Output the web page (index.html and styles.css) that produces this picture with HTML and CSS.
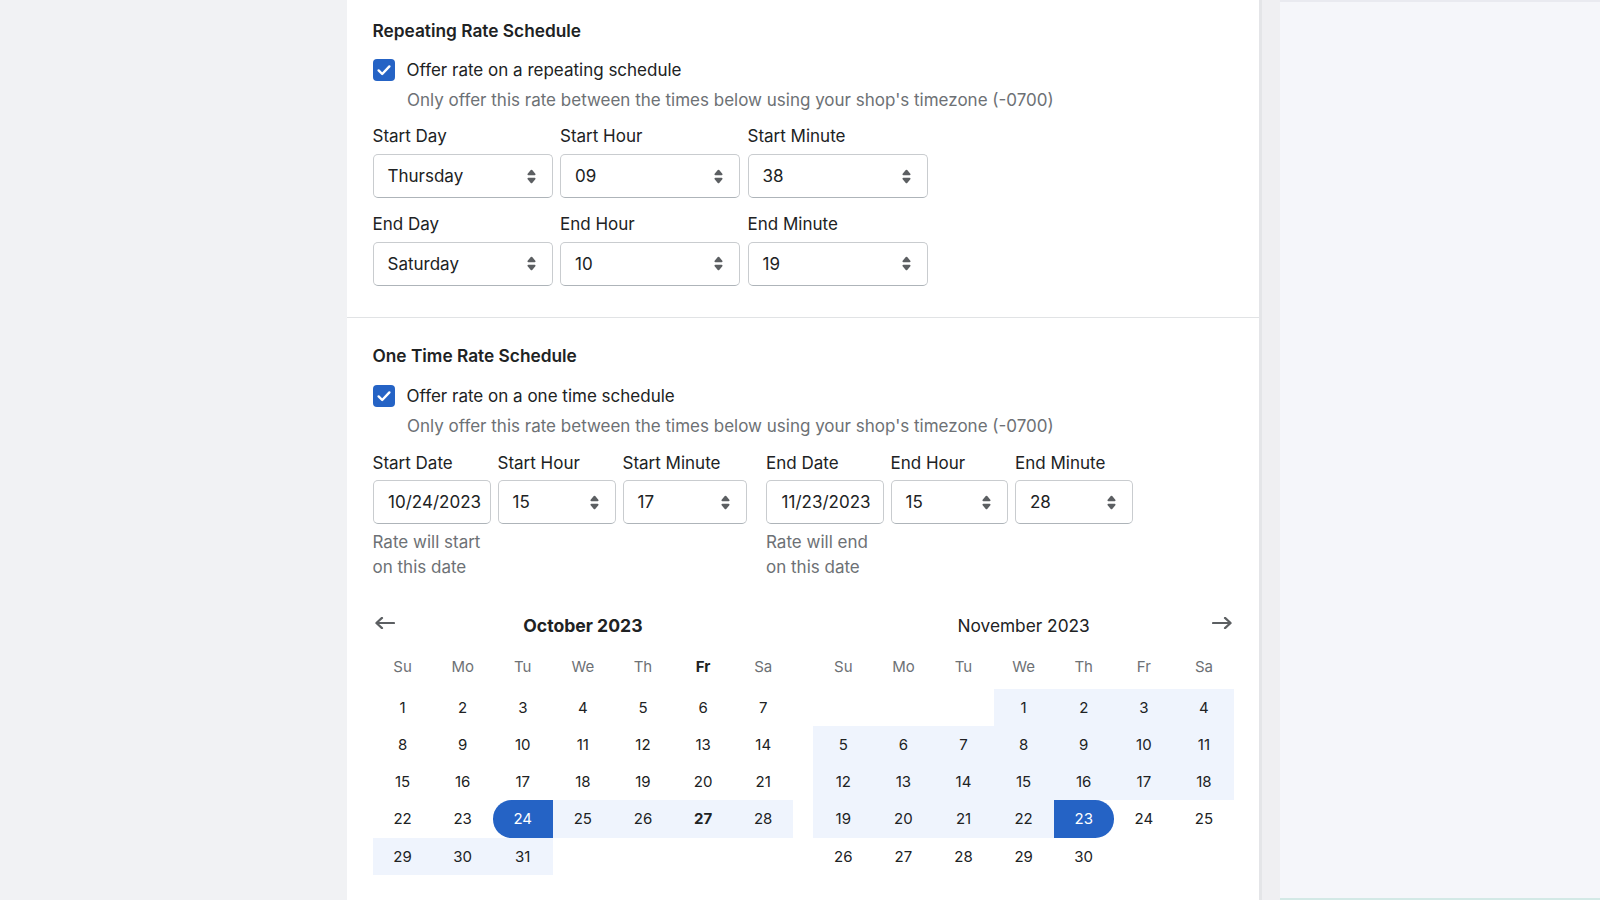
FILE: index.html
```html
<!DOCTYPE html>
<html lang="en">
<head>
<meta charset="utf-8">
<title>Rate Schedule</title>
<link rel="stylesheet" href="styles.css">
</head>
<body>
<div class="page">
  <div class="side-left"></div>
  <main class="card">
    <section class="section section-first">
      <h2 class="heading">Repeating Rate Schedule</h2>
      <label class="check-row">
        <span class="checkbox"><svg viewBox="0 0 22 22" width="22" height="22"><path d="M5.6 11.4l3.6 3.6 7.2-7.6" fill="none" stroke="#fff" stroke-width="2.4" stroke-linecap="round" stroke-linejoin="round"/></svg></span>
        <span class="check-label">Offer rate on a repeating schedule</span>
      </label>
      <p class="help">Only offer this rate between the times below using your shop's timezone (-0700)</p>
      <div class="select-row">
        <div class="field w180"><div class="label">Start Day</div><div class="control select"><span class="value">Thursday</span><svg class="sel-icon" viewBox="0 0 20 20"><path d="M7.676 9h4.648c.563 0 .879-.603.53-1.014l-2.323-2.746a.708.708 0 0 0-1.062 0l-2.324 2.746c-.347.411-.032 1.014.531 1.014Zm4.648 2h-4.648c-.563 0-.878.603-.53 1.014l2.323 2.746c.27.32.792.32 1.062 0l2.323-2.746c.349-.411.033-1.014-.53-1.014Z"/></svg></div></div>
        <div class="field w180"><div class="label">Start Hour</div><div class="control select"><span class="value">09</span><svg class="sel-icon" viewBox="0 0 20 20"><path d="M7.676 9h4.648c.563 0 .879-.603.53-1.014l-2.323-2.746a.708.708 0 0 0-1.062 0l-2.324 2.746c-.347.411-.032 1.014.531 1.014Zm4.648 2h-4.648c-.563 0-.878.603-.53 1.014l2.323 2.746c.27.32.792.32 1.062 0l2.323-2.746c.349-.411.033-1.014-.53-1.014Z"/></svg></div></div>
        <div class="field w180"><div class="label">Start Minute</div><div class="control select"><span class="value">38</span><svg class="sel-icon" viewBox="0 0 20 20"><path d="M7.676 9h4.648c.563 0 .879-.603.53-1.014l-2.323-2.746a.708.708 0 0 0-1.062 0l-2.324 2.746c-.347.411-.032 1.014.531 1.014Zm4.648 2h-4.648c-.563 0-.878.603-.53 1.014l2.323 2.746c.27.32.792.32 1.062 0l2.323-2.746c.349-.411.033-1.014-.53-1.014Z"/></svg></div></div>
      </div>
      <div class="select-row row-second">
        <div class="field w180"><div class="label">End Day</div><div class="control select"><span class="value">Saturday</span><svg class="sel-icon" viewBox="0 0 20 20"><path d="M7.676 9h4.648c.563 0 .879-.603.53-1.014l-2.323-2.746a.708.708 0 0 0-1.062 0l-2.324 2.746c-.347.411-.032 1.014.531 1.014Zm4.648 2h-4.648c-.563 0-.878.603-.53 1.014l2.323 2.746c.27.32.792.32 1.062 0l2.323-2.746c.349-.411.033-1.014-.53-1.014Z"/></svg></div></div>
        <div class="field w180"><div class="label">End Hour</div><div class="control select"><span class="value">10</span><svg class="sel-icon" viewBox="0 0 20 20"><path d="M7.676 9h4.648c.563 0 .879-.603.53-1.014l-2.323-2.746a.708.708 0 0 0-1.062 0l-2.324 2.746c-.347.411-.032 1.014.531 1.014Zm4.648 2h-4.648c-.563 0-.878.603-.53 1.014l2.323 2.746c.27.32.792.32 1.062 0l2.323-2.746c.349-.411.033-1.014-.53-1.014Z"/></svg></div></div>
        <div class="field w180"><div class="label">End Minute</div><div class="control select"><span class="value">19</span><svg class="sel-icon" viewBox="0 0 20 20"><path d="M7.676 9h4.648c.563 0 .879-.603.53-1.014l-2.323-2.746a.708.708 0 0 0-1.062 0l-2.324 2.746c-.347.411-.032 1.014.531 1.014Zm4.648 2h-4.648c-.563 0-.878.603-.53 1.014l2.323 2.746c.27.32.792.32 1.062 0l2.323-2.746c.349-.411.033-1.014-.53-1.014Z"/></svg></div></div>
      </div>
    </section>

    <section class="section section-second">
      <h2 class="heading">One Time Rate Schedule</h2>
      <label class="check-row">
        <span class="checkbox"><svg viewBox="0 0 22 22" width="22" height="22"><path d="M5.6 11.4l3.6 3.6 7.2-7.6" fill="none" stroke="#fff" stroke-width="2.4" stroke-linecap="round" stroke-linejoin="round"/></svg></span>
        <span class="check-label">Offer rate on a one time schedule</span>
      </label>
      <p class="help">Only offer this rate between the times below using your shop's timezone (-0700)</p>

      <div class="date-row">
        <div class="date-group">
          <div class="field w118"><div class="label">Start Date</div><div class="control date"><span class="date-text">10/24/2023</span></div><div class="hint">Rate will start on this date</div></div>
          <div class="field w118"><div class="label">Start Hour</div><div class="control select"><span class="value">15</span><svg class="sel-icon" viewBox="0 0 20 20"><path d="M7.676 9h4.648c.563 0 .879-.603.53-1.014l-2.323-2.746a.708.708 0 0 0-1.062 0l-2.324 2.746c-.347.411-.032 1.014.531 1.014Zm4.648 2h-4.648c-.563 0-.878.603-.53 1.014l2.323 2.746c.27.32.792.32 1.062 0l2.323-2.746c.349-.411.033-1.014-.53-1.014Z"/></svg></div></div>
          <div class="field w124"><div class="label">Start Minute</div><div class="control select"><span class="value">17</span><svg class="sel-icon" viewBox="0 0 20 20"><path d="M7.676 9h4.648c.563 0 .879-.603.53-1.014l-2.323-2.746a.708.708 0 0 0-1.062 0l-2.324 2.746c-.347.411-.032 1.014.531 1.014Zm4.648 2h-4.648c-.563 0-.878.603-.53 1.014l2.323 2.746c.27.32.792.32 1.062 0l2.323-2.746c.349-.411.033-1.014-.53-1.014Z"/></svg></div></div>
        </div>
        <div class="date-group">
          <div class="field w117"><div class="label">End Date</div><div class="control date"><span class="date-text">11/23/2023</span></div><div class="hint">Rate will end on this date</div></div>
          <div class="field w117"><div class="label">End Hour</div><div class="control select"><span class="value">15</span><svg class="sel-icon" viewBox="0 0 20 20"><path d="M7.676 9h4.648c.563 0 .879-.603.53-1.014l-2.323-2.746a.708.708 0 0 0-1.062 0l-2.324 2.746c-.347.411-.032 1.014.531 1.014Zm4.648 2h-4.648c-.563 0-.878.603-.53 1.014l2.323 2.746c.27.32.792.32 1.062 0l2.323-2.746c.349-.411.033-1.014-.53-1.014Z"/></svg></div></div>
          <div class="field w118"><div class="label">End Minute</div><div class="control select"><span class="value">28</span><svg class="sel-icon" viewBox="0 0 20 20"><path d="M7.676 9h4.648c.563 0 .879-.603.53-1.014l-2.323-2.746a.708.708 0 0 0-1.062 0l-2.324 2.746c-.347.411-.032 1.014.531 1.014Zm4.648 2h-4.648c-.563 0-.878.603-.53 1.014l2.323 2.746c.27.32.792.32 1.062 0l2.323-2.746c.349-.411.033-1.014-.53-1.014Z"/></svg></div></div>
        </div>
      </div>

      <div class="calendars">
        <div class="cal">
          <div class="cal-head">
            <span class="nav nav-prev"><svg viewBox="0 0 20 12" width="20" height="12"><path d="M19 6H1.6M7 0.9L1.4 6 7 11.1" fill="none" stroke="#5c5f62" stroke-width="2.2" stroke-linecap="round" stroke-linejoin="round"/></svg></span>
            <div class="cal-title cal-title-bold">October 2023</div>
            <span class="nav"></span>
          </div>
          <div class="weekdays">
            <span>Su</span><span>Mo</span><span>Tu</span><span>We</span><span>Th</span><span class="today">Fr</span><span>Sa</span>
          </div>
          <div class="days">
            <span>1</span><span>2</span><span>3</span><span>4</span><span>5</span><span>6</span><span>7</span>
            <span>8</span><span>9</span><span>10</span><span>11</span><span>12</span><span>13</span><span>14</span>
            <span>15</span><span>16</span><span>17</span><span>18</span><span>19</span><span>20</span><span>21</span>
            <span>22</span><span>23</span><span class="sel sel-start">24</span><span class="range">25</span><span class="range">26</span><span class="range today">27</span><span class="range">28</span>
            <span class="range">29</span><span class="range">30</span><span class="range">31</span>
          </div>
        </div>
        <div class="cal">
          <div class="cal-head">
            <span class="nav"></span>
            <div class="cal-title">November 2023</div>
            <span class="nav nav-next"><svg viewBox="0 0 20 12" width="20" height="12"><path d="M1 6h17.4M13 0.9L18.6 6 13 11.1" fill="none" stroke="#5c5f62" stroke-width="2.2" stroke-linecap="round" stroke-linejoin="round"/></svg></span>
          </div>
          <div class="weekdays">
            <span>Su</span><span>Mo</span><span>Tu</span><span>We</span><span>Th</span><span>Fr</span><span>Sa</span>
          </div>
          <div class="days">
            <span class="blank"></span><span class="blank"></span><span class="blank"></span><span class="range">1</span><span class="range">2</span><span class="range">3</span><span class="range">4</span>
            <span class="range">5</span><span class="range">6</span><span class="range">7</span><span class="range">8</span><span class="range">9</span><span class="range">10</span><span class="range">11</span>
            <span class="range">12</span><span class="range">13</span><span class="range">14</span><span class="range">15</span><span class="range">16</span><span class="range">17</span><span class="range">18</span>
            <span class="range">19</span><span class="range">20</span><span class="range">21</span><span class="range">22</span><span class="sel sel-end">23</span><span>24</span><span>25</span>
            <span>26</span><span>27</span><span>28</span><span>29</span><span>30</span>
          </div>
        </div>
      </div>
    </section>
  </main>
  <div class="gap-strip"></div>
  <div class="side-right"></div>
</div>
</body>
</html>
```
FILE: styles.css
```css
* { box-sizing: border-box; }
html, body { margin: 0; padding: 0; }
body {
  font-family: Inter, "Noto Sans", "Liberation Sans", sans-serif;
  color: #202223;
  font-size: 17px;
  background: #f1f2f4;
}
.page {
  display: flex;
  width: 1600px;
  height: 900px;
  overflow: hidden;
}
.side-left {
  width: 347px;
  flex: none;
  background: #f1f2f4;
}
.card {
  width: 912px;
  flex: none;
  background: #fff;
}
.gap-strip {
  width: 21px;
  flex: none;
  background: #efeff2;
  border-left: 3px solid #e4e5e8;
}
.side-right {
  flex: 1;
  background: #f5f6fa;
  border-top: 2px solid #e9eaf0;
  border-bottom: 2px solid #d3e9e6;
}
.section {
  padding: 0 25px 0 25.5px;
}
.section-first {
  padding-top: 18.5px;
  padding-bottom: 31.5px;
  border-bottom: 1px solid #e1e3e5;
}
.section-second {
  padding-top: 26px;
}
.heading {
  margin: 0;
  font-size: 17.3px;
  line-height: 24px;
  font-weight: 600;
}
.check-row {
  display: flex;
  align-items: center;
  gap: 12px;
  height: 22px;
  margin-top: 16.8px;
}
.checkbox {
  width: 22px;
  height: 22px;
  flex: none;
  border-radius: 4px;
  background: #2563c5;
  display: flex;
}
.check-label {
  line-height: 22px;
}
.help {
  margin: 7.2px 0 0 34.5px;
  line-height: 24px;
  color: #6d7175;
}
.select-row {
  display: flex;
  gap: 7.5px;
  margin-top: 12px;
}
.row-second { margin-top: 13.5px; }
.field { flex: none; }
.w180 { width: 180px; }
.w118 { width: 118px; }
.w117 { width: 117.5px; }
.w124 { width: 124px; }
.label {
  line-height: 24px;
  margin-bottom: 5.8px;
  white-space: nowrap;
}
.control {
  height: 44px;
  border: 1px solid #c9cccf;
  border-bottom-color: #aeb4b9;
  border-radius: 5px;
  background: #fff;
  display: flex;
  align-items: center;
}
.select {
  justify-content: space-between;
  padding: 0 7px 0 14px;
}
.sel-icon {
  width: 27px;
  height: 27px;
  fill: #5c5f62;
  flex: none;
}
.date {
  padding: 0 1px 0 14.6px;
}
.date-text {
  display: block;
  white-space: nowrap;
}
.date-row {
  display: flex;
  gap: 19.5px;
  margin-top: 12.5px;
  align-items: flex-start;
}
.date-group {
  display: flex;
  gap: 7px;
}
.hint {
  margin-top: 5.9px;
  line-height: 24.5px;
  color: #6d7175;
}
.calendars {
  display: flex;
  gap: 20px;
  margin-top: 34.8px;
}
.cal { flex: 1; }
.cal-head {
  display: grid;
  grid-template-columns: 24px 1fr 24px;
  height: 24px;
}
.nav { display: flex; }
.nav svg { margin-top: 3px; }
.nav-prev svg { margin-left: 2.5px; }
.nav-next { justify-content: flex-end; }
.nav-next svg { margin-right: 2.3px; }
.cal-title {
  text-align: center;
  line-height: 24px;
  font-size: 17.3px;
}
.cal-title-bold { font-weight: 700; font-size: 17.6px; }
.weekdays, .days {
  display: grid;
  grid-template-columns: repeat(7, 1fr);
}
.weekdays {
  margin-top: 9.5px;
  color: #6d7175;
  font-size: 15px;
}
.weekdays span {
  text-align: center;
  line-height: 37.3px;
}
.weekdays .today { color: #202223; font-weight: 700; }
.days {
  margin-top: 3.7px;
  font-size: 15px;
}
.days span {
  height: 37.3px;
  line-height: 37.3px;
  text-align: center;
}
.days .range { background: #eff4fd; }
.days .today { font-weight: 700; }
.days .sel { background: #2563c5; color: #fff; }
.days .sel-start { border-radius: 18.65px 0 0 18.65px; }
.days .sel-end { border-radius: 0 18.65px 18.65px 0; }
```
